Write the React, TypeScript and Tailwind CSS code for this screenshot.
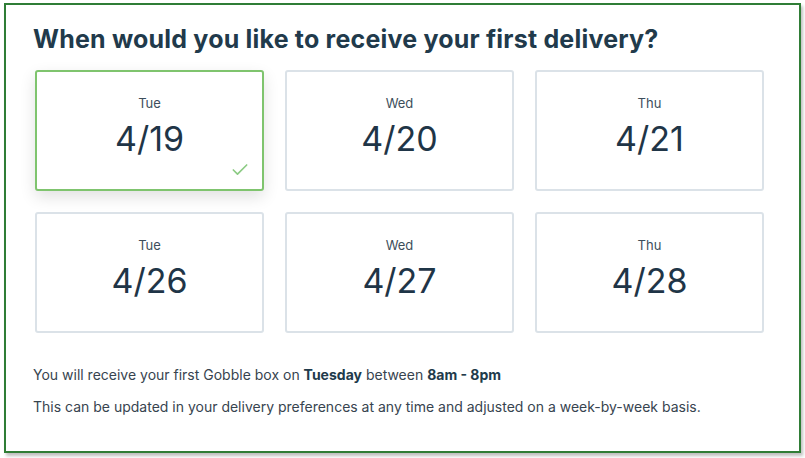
import { Check } from 'lucide-react';

const days = [
  { day: 'Tue', date: '4/19', selected: true },
  { day: 'Wed', date: '4/20' },
  { day: 'Thu', date: '4/21' },
  { day: 'Tue', date: '4/26' },
  { day: 'Wed', date: '4/27' },
  { day: 'Thu', date: '4/28' },
];

export default function App() {
  return (
    <div className="w-[805px] h-[458px] bg-white pt-[3px] pl-[4px] font-['Inter',sans-serif]">
      <div className="w-[797px] h-[450px] border-2 border-[#2f7d36] bg-white shadow-[2px_3px_3px_rgba(0,0,0,0.25)] pl-[27px] pr-[35px] pt-[18px]">
        <h1 className="text-[25px] leading-[32px] font-bold text-[#213a4b] tracking-[0.2px]">
          When would you like to receive your first delivery?
        </h1>
        <div className="grid grid-cols-[229px_229px_229px] gap-x-[21px] gap-y-[21px] mt-[15px] ml-[2px]">
          {days.map((d) => (
            <div
              key={d.date}
              className={
                d.selected
                  ? 'relative h-[121px] rounded-[3px] border-2 border-[#7fc46e] bg-white shadow-[0_6px_16px_rgba(0,0,0,0.12)] flex flex-col items-center pt-[23px]'
                  : 'relative h-[121px] rounded-[3px] border-2 border-[#dbe2e8] bg-white flex flex-col items-center pt-[23px]'
              }
            >
              <span className="text-[13px] leading-[16px] text-[#3d4e5b]">{d.day}</span>
              <span className="text-[34px] leading-[40px] text-[#1f3547] mt-[8px]">{d.date}</span>
              {d.selected && (
                <Check className="absolute right-[12px] bottom-[9px] size-[20px] text-[#8ccb84]" strokeWidth={2} />
              )}
            </div>
          ))}
        </div>
        <div className="mt-[33px] text-[14px] leading-[18px] text-[#37444f]">
          <p>
            You will receive your first Gobble box on <b className="text-[#213a4b]">Tuesday</b> between{' '}
            <b className="text-[#213a4b]">8am - 8pm</b>
          </p>
          <p className="mt-[14px]">
            This can be updated in your delivery preferences at any time and adjusted on a week-by-week basis.
          </p>
        </div>
      </div>
    </div>
  );
}
